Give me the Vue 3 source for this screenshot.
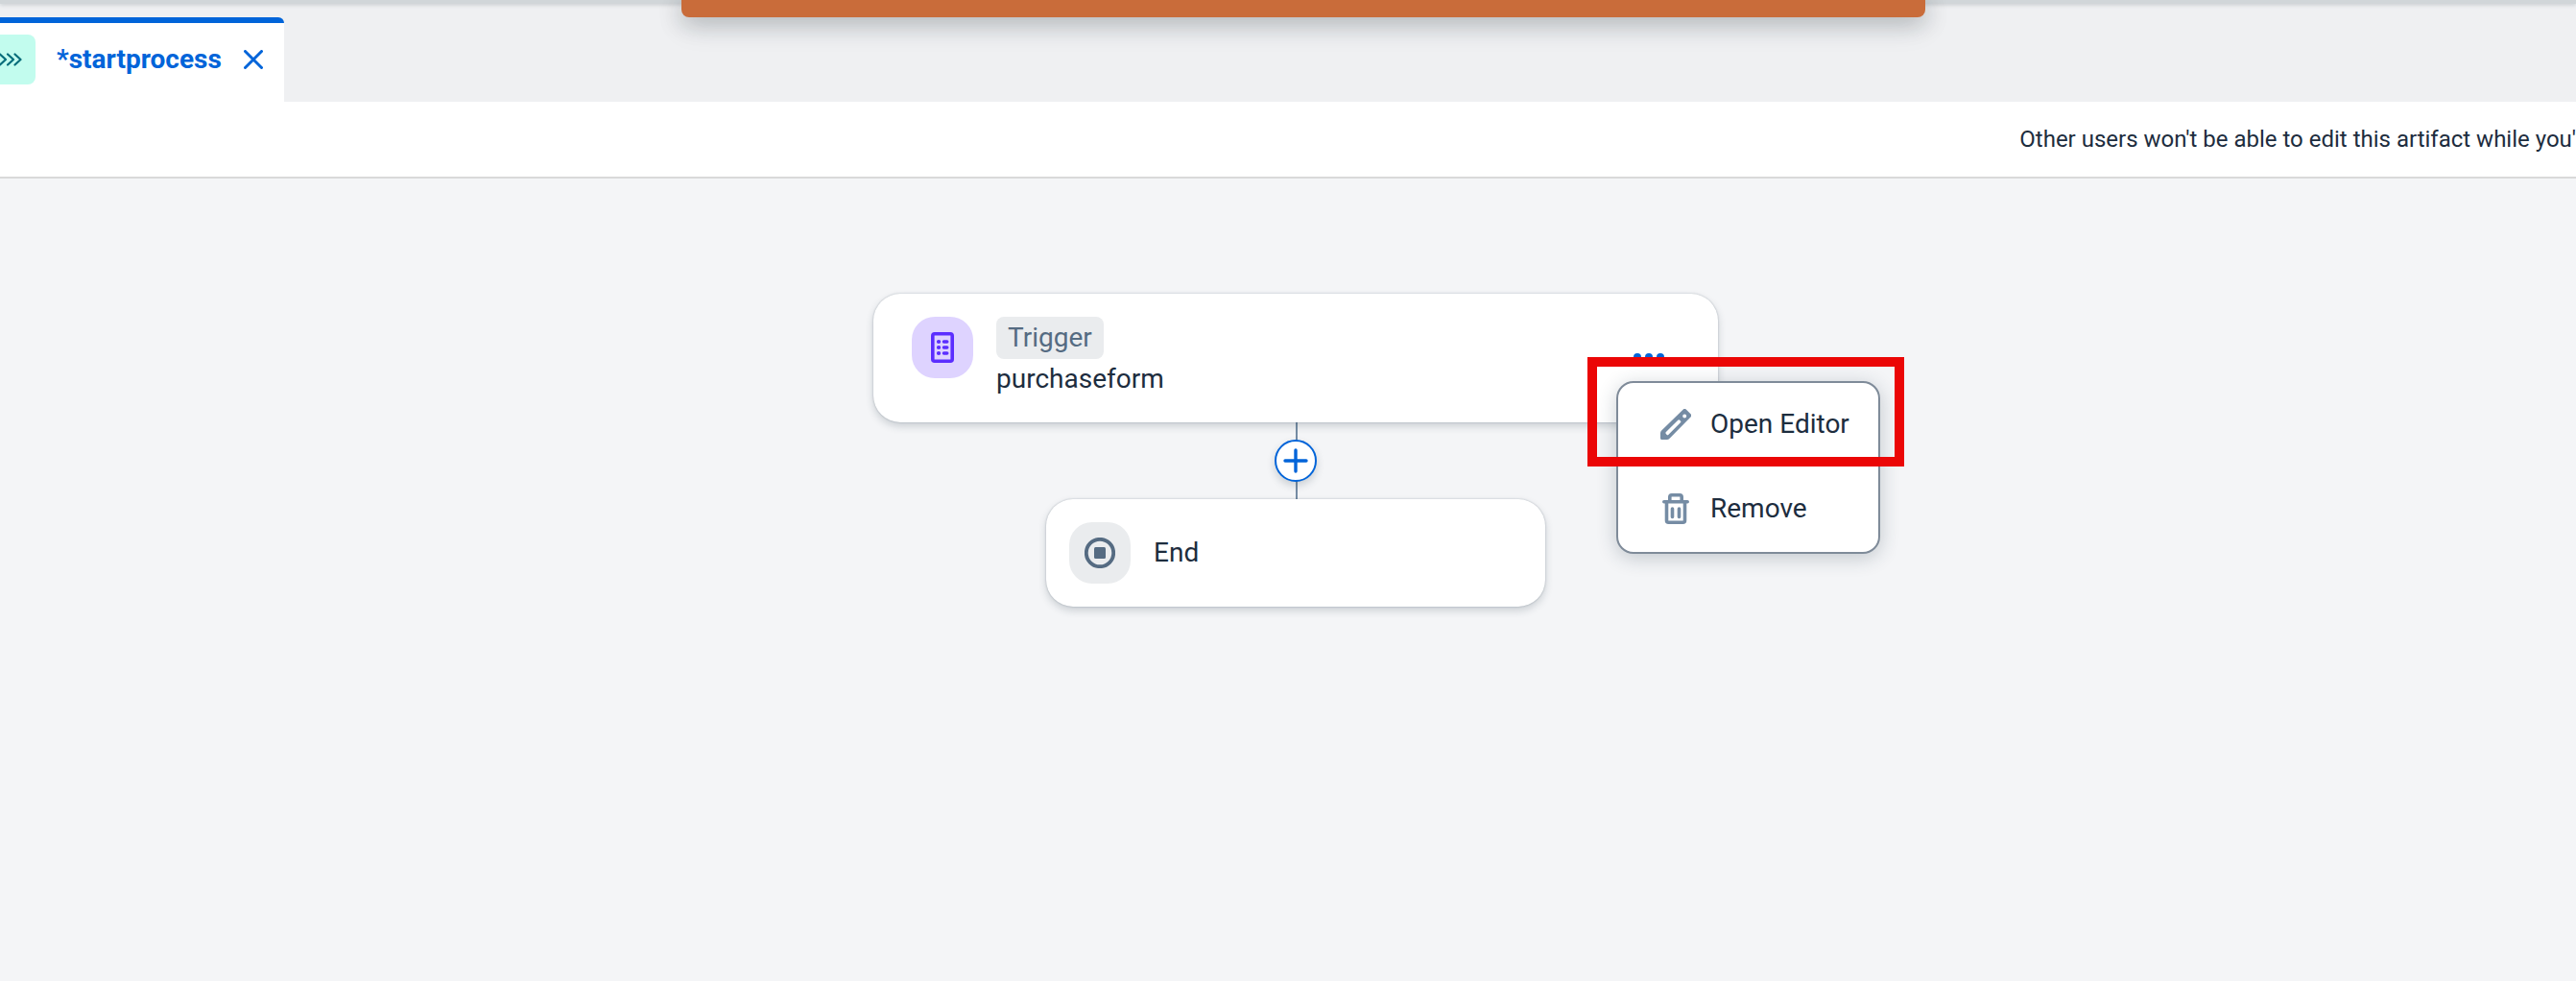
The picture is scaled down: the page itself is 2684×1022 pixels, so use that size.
<script setup>
const menuItems = [
  { id: 'edit', label: 'Open Editor' },
  { id: 'remove', label: 'Remove' },
]
</script>

<template>
  <div class="page">
    <div class="shell-edge"></div>
    <div class="banner-layer"><div class="banner" role="status"></div></div>

    <header class="tabs">
      <div class="tab">
        <span class="tab-badge">
          <svg width="38" height="52" viewBox="0 0 38 52" fill="none" stroke="#046c7a" stroke-width="2.2" stroke-linecap="round" stroke-linejoin="round">
            <path d="M0 20.5 6 26 0 31.500M8 20.500 14 26 8 31.500M15.500 20.500 21.500 26 15.500 31.500" />
          </svg>
        </span>
        <a class="tab-title" href="#startprocess">*startprocess</a>
        <button class="tab-close" aria-label="Close tab">
          <svg width="20" height="20" viewBox="0 0 20 20" fill="none" stroke="#0064d9" stroke-width="3" stroke-linecap="round">
            <path d="M1.500 1.500 18.500 18.500M18.500 1.500 1.500 18.500" />
          </svg>
        </button>
      </div>
    </header>

    <div class="notice"><span>Other users won't be able to edit this artifact while you'</span></div>

    <main class="canvas">
      <section class="card trigger">
        <span class="tile purple">
          <svg width="24" height="32" viewBox="0 0 24 32" fill="none" stroke="#5b2eff">
            <rect x="1.800" y="1.800" width="20.400" height="28.400" rx="2" stroke-width="3.600" />
            <path d="M8 10h.1M8 16h.1M8 22h.1" stroke-width="4.200" stroke-linecap="round" />
            <path d="M13.500 10h3.200M13.500 16h3.200M13.500 22h3.200" stroke-width="3.600" stroke-linecap="round" />
          </svg>
        </span>
        <div class="trigger-text">
          <span class="chip">Trigger</span>
          <span class="name">purchaseform</span>
        </div>
        <button class="more" aria-label="More actions">
          <svg width="32" height="10" viewBox="0 0 32 10" fill="#0064d9">
            <circle cx="4" cy="4" r="4" /><circle cx="16" cy="4" r="4" /><circle cx="28" cy="4" r="4" />
          </svg>
        </button>

        <div class="menu" role="menu">
          <button v-for="item in menuItems" :key="item.id" class="menu-item" role="menuitem">
            <svg v-if="item.id === 'edit'" width="32" height="32" viewBox="0 0 32 32">
              <path fill="#758ca4" fill-rule="evenodd" d="M23.600.7a2.400 2.400 0 0 1 3.400 0l4.500 4.500a2.400 2.400 0 0 1 0 3.400L9.600 30.800a4 4 0 0 1-2.800 1.200H1.600A1.600 1.600 0 0 1 0 30.400v-5a4 4 0 0 1 1.200-2.900ZM18.300 11.700 5.900 24.100a1.400 1.400 0 0 0 0 2l.6.6a1.400 1.400 0 0 0 2 0L20.900 14.300a1.300 1.300 0 0 0 0-1.900l-.7-.7a1.300 1.300 0 0 0-1.900 0ZM25.200 5.500a2 2 0 1 0 0 4 2 2 0 0 0 0-4Z" />
            </svg>
            <svg v-else width="32" height="32" viewBox="0 0 32 32" fill="none" stroke="#758ca4" stroke-width="3.600" stroke-linecap="round" stroke-linejoin="round">
              <path d="M3.800 8.800H28.200M9.800 8V3.800a2 2 0 0 1 2-2h8.400a2 2 0 0 1 2 2V8M6.500 9v19.200a2 2 0 0 0 2 2h15a2 2 0 0 0 2-2V9M12.500 16v8.400M19.500 16v8.400" />
            </svg>
            <span>{{ item.label }}</span>
          </button>
          <div class="highlight"></div>
        </div>
      </section>

      <div class="connector">
        <button class="add" aria-label="Add step">
          <svg width="26" height="26" viewBox="0 0 26 26" fill="none" stroke="#0064d9" stroke-width="3.400" stroke-linecap="round">
            <path d="M13 2v22M2 13h22" />
          </svg>
        </button>
      </div>

      <section class="card end">
        <span class="tile grey">
          <svg width="32" height="32" viewBox="0 0 32 32">
            <circle cx="16" cy="16" r="14.200" fill="none" stroke="#556b82" stroke-width="3.800" />
            <rect x="10" y="10" width="12" height="12" rx="1.500" fill="#556b82" />
          </svg>
        </span>
        <span>End</span>
      </section>
    </main>
  </div>
</template>

<style>
body {
  margin: 0;
  background: #f4f5f7;
}
</style>

<style scoped>
.page {
  position: relative;
  display: flex;
  flex-direction: column;
  min-height: 100vh;
  overflow: hidden;
  background: #f4f5f7;
  color: #1d2d3e;
  font-family: Roboto, "Liberation Sans", sans-serif;
  font-size: 28px;
  line-height: 40px;
}
button {
  display: flex;
  align-items: center;
  padding: 0;
  border: 0;
  background: none;
  color: inherit;
  font: inherit;
  cursor: pointer;
}
svg {
  display: block;
  flex: none;
}
.shell-edge {
  height: 4px;
  background: #d1d6d9;
  box-shadow: 0 1px 4px #c3c8cc;
  z-index: 1;
}
.banner-layer {
  position: absolute;
  inset: 0 0 auto 32px;
  display: flex;
  justify-content: center;
  z-index: 2;
}
.banner {
  width: 1296px;
  height: 18px;
  border-radius: 0 0 8px 8px;
  background: #c96c3a;
  box-shadow: 0 8px 32px rgba(34, 53, 72, 0.12), 0 4px 24px rgba(20, 30, 30, 0.3);
}
.tabs {
  display: flex;
  padding-top: 14px;
  background: #eff0f2;
}
.tab {
  display: flex;
  align-items: center;
  box-sizing: border-box;
  width: 296px;
  height: 88px;
  border-top: 6px solid #0064d9;
  border-top-right-radius: 6px;
  padding-bottom: 6px;
  background: #fff;
}
.tab-badge {
  width: 37px;
  overflow: hidden;
  border-radius: 0 8px 8px 0;
  background: #c2fcee;
}
.tab-title {
  flex: 1;
  margin-left: 22px;
  color: #0064d9;
  font-weight: 700;
  text-decoration: none;
}
.tab-close {
  margin-right: 22px;
}
.notice {
  display: flex;
  align-items: center;
  justify-content: flex-end;
  height: 78px;
  border-bottom: 2px solid #d9d9d9;
  background: #fff;
  font-size: 24px;
  white-space: nowrap;
}
.canvas {
  display: flex;
  flex-direction: column;
  align-items: center;
  padding: 120px 0 120px 16px;
}
.card {
  display: flex;
  box-sizing: border-box;
  max-width: 100%;
  border-radius: 28px;
  background: #fff;
  box-shadow: 0 0 2px rgba(34, 53, 72, 0.32), 0 4px 8px rgba(34, 53, 72, 0.2);
}
.trigger {
  position: relative;
  width: 880px;
  padding: 24px 56px 24px 40px;
}
.end {
  align-items: center;
  gap: 24px;
  width: 520px;
  padding: 24px;
}
.tile {
  display: flex;
  align-items: center;
  justify-content: center;
  flex: none;
  width: 64px;
  height: 64px;
  border-radius: 24px;
}
.purple {
  background: #ded3ff;
}
.grey {
  background: #eaecee;
}
.trigger-text {
  display: flex;
  flex: 1;
  flex-direction: column;
  align-items: flex-start;
  margin-left: 24px;
}
.chip {
  padding: 0 12px;
  border-radius: 8px;
  background: #eaecee;
  color: #556b82;
  line-height: 44px;
}
.name {
  line-height: 42px;
}
.connector {
  display: flex;
  align-items: center;
  justify-content: center;
  width: 44px;
  height: 80px;
  background: linear-gradient(#758ca4, #758ca4) 22px 0 / 2px 100% no-repeat;
}
.add {
  justify-content: center;
  box-sizing: border-box;
  width: 44px;
  height: 44px;
  border: 2px solid #0064d9;
  border-radius: 50%;
  background: #fff;
  box-shadow: 0 4px 8px rgba(34, 53, 72, 0.2);
}
.menu {
  position: absolute;
  top: 91px;
  left: 774px;
  box-sizing: border-box;
  width: 275px;
  border: 2px solid #7f8b99;
  border-radius: 18px;
  background: #fff;
  box-shadow: 0 4px 20px rgba(34, 53, 72, 0.24);
}
.menu-item {
  box-sizing: border-box;
  gap: 20px;
  width: 100%;
  height: 88px;
  padding: 0 0 2px 44px;
  white-space: nowrap;
}
.highlight {
  position: absolute;
  inset: -27px -27px 89px -32px;
  border: 10px solid #eb0606;
  pointer-events: none;
}
</style>
